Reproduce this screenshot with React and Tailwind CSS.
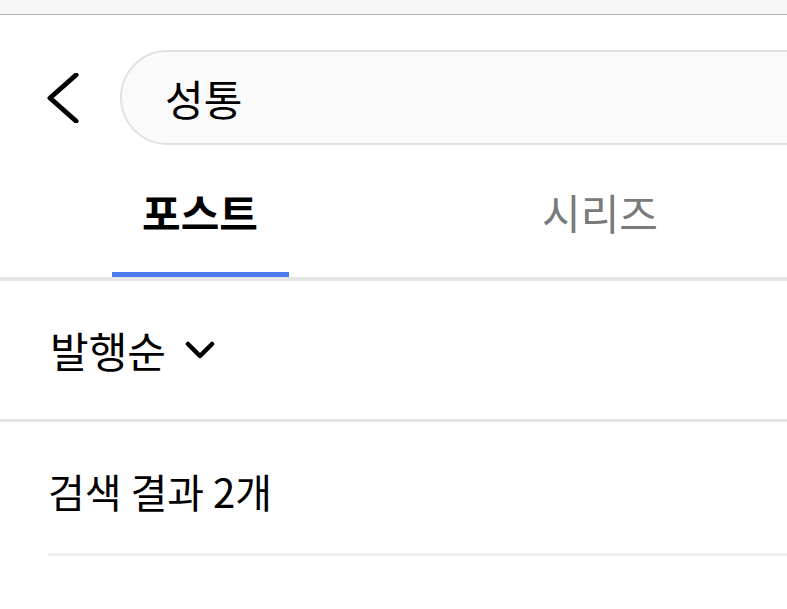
import { useState } from "react";

export default function App() {
  const [tab, setTab] = useState("post");

  return (
    <div className="w-[787px] h-[609px] overflow-hidden bg-white text-black font-['Noto_Sans_CJK_KR',sans-serif]">
      {/* browser top strip */}
      <div className="h-[15px] bg-[#f6f6f6] border-b border-[#b5b5b5]" />

      {/* search header */}
      <div className="flex items-center mt-[35px] pl-[47px]">
        <button className="w-[32px] h-[50px] flex items-center">
          <svg width="32" height="50" viewBox="0 0 32 50">
            <polyline points="29,2 3,25 29,48" fill="none" stroke="#000" strokeWidth="5" strokeLinecap="round" strokeLinejoin="round" />
          </svg>
        </button>
        <div className="ml-[41px] w-[720px] h-[95px] shrink-0 rounded-full bg-[#fafafa] border-2 border-[#e2e2e2] flex items-center pl-[43px]">
          <span className="text-[42px] leading-none">성통</span>
        </div>
      </div>

      {/* tabs */}
      <div className="flex w-[800px] h-[136px] border-b-4 border-[#e6e6e6]">
        {[
          { key: "post", label: "포스트" },
          { key: "series", label: "시리즈" },
        ].map(t => (
          <button key={t.key} onClick={() => setTab(t.key)} className="w-[400px] flex flex-col items-center justify-end">
            <span className={tab === t.key ? "text-[42px] leading-[48px] font-bold text-black" : "text-[42px] leading-[48px] text-[#7a7a7a]"}>
              {t.label}
            </span>
            <span className={tab === t.key ? "mt-[36px] w-[177px] h-[5px] bg-[#4a7cf0]" : "mt-[36px] w-[177px] h-[5px] bg-transparent"} />
          </button>
        ))}
      </div>

      {/* sort */}
      <div className="h-[141px] flex items-center pl-[50px] border-b-[3px] border-[#e6e6e6]">
        <span className="text-[42px] leading-none">발행순</span>
        <svg className="ml-[19px]" width="30" height="20" viewBox="0 0 30 20">
          <polyline points="3,4 15,16 27,4" fill="none" stroke="#000" strokeWidth="4.5" strokeLinecap="round" strokeLinejoin="round" />
        </svg>
      </div>

      {/* result count */}
      <div className="ml-[48px] h-[134px] pt-[6px] flex items-center border-b-[3px] border-[#eeeeee]">
        <span className="text-[40px] leading-none">검색 결과 2개</span>
      </div>
    </div>
  );
}
